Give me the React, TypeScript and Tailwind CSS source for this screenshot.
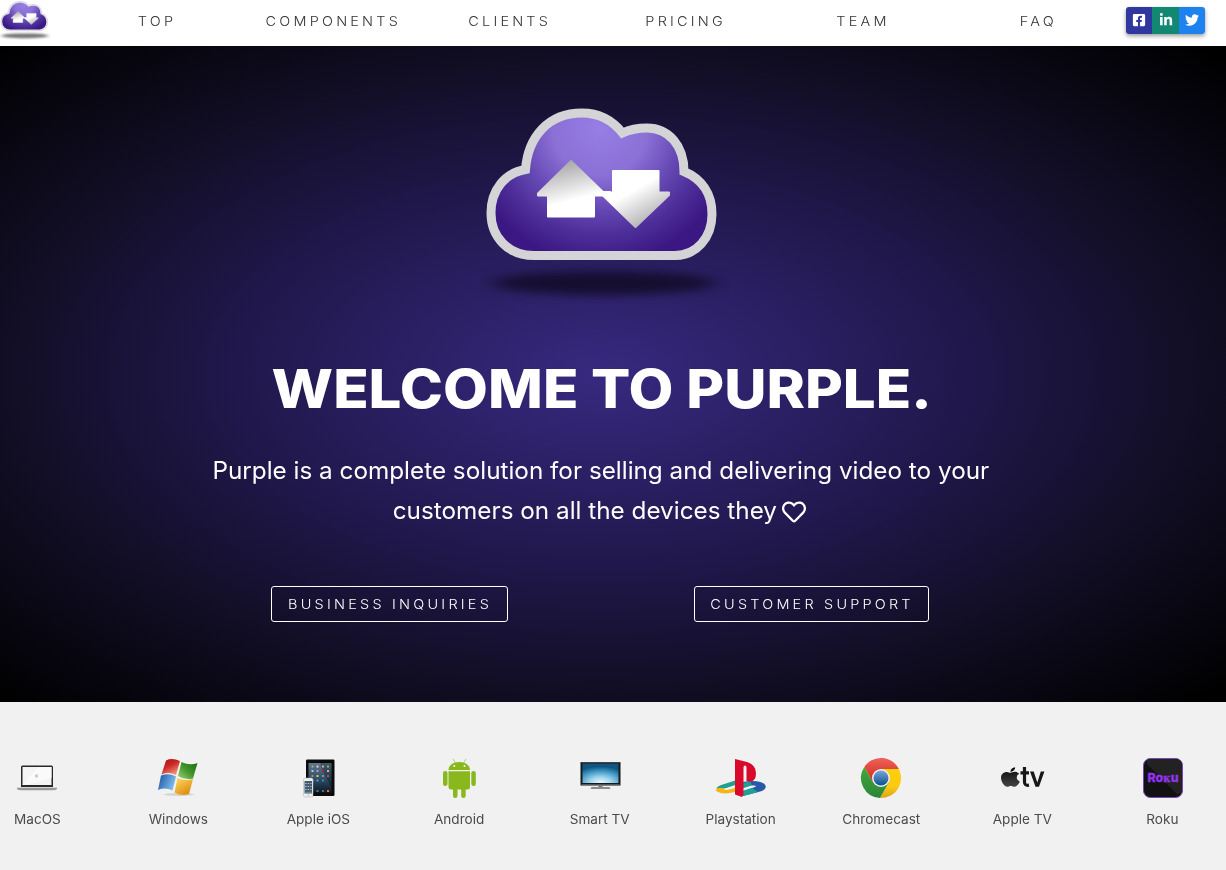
import React from "react";
import { FaFacebookSquare, FaLinkedinIn, FaTwitter, FaRegHeart } from "react-icons/fa";

function CloudLogo({ id, className, rim, shadow }: { id: string; className: string; rim: string; shadow: string }) {
  const cloud =
    "M534 255.500C508 255.500 491 237 491 213C491 190 505 173 525.500 169.500C528 137 548 113 582 113C601 113 613 121 622.500 133C631 129 637 128 647 128C669 128 684 146 684 171.500C702 179 712 194 712 214C712 238 696 255.500 675 255.500Z";
  return (
    <svg className={className} viewBox="480 104 250 200" preserveAspectRatio="none">
      <defs>
        <radialGradient id={id + "b"} gradientUnits="userSpaceOnUse" cx="600" cy="128" r="135">
          <stop offset="0" stopColor="#967ee5" />
          <stop offset=".35" stopColor="#8b70d6" />
          <stop offset=".6" stopColor="#6648b4" />
          <stop offset=".8" stopColor="#4d2e99" />
          <stop offset="1" stopColor="#3b1783" />
        </radialGradient>
        <linearGradient id={id + "u"} x1=".35" y1="0" x2=".6" y2=".75">
          <stop stopColor="#a5a5a8" />
          <stop offset=".9" stopColor="#fff" />
        </linearGradient>
        <linearGradient id={id + "d"} x1=".35" y1=".25" x2=".75" y2=".85">
          <stop offset=".2" stopColor="#fff" />
          <stop offset="1" stopColor="#b6b5b8" />
        </linearGradient>
        <filter id={id + "f"} x="-30%" y="-100%" width="160%" height="300%" colorInterpolationFilters="sRGB">
          <feGaussianBlur stdDeviation="10 5" />
        </filter>
      </defs>
      <ellipse cx="604" cy="283" rx="112" ry="12" fill={shadow} filter={`url(#${id}f)`} />
      <path d={cloud} fill={`url(#${id}b)`} stroke={rim} strokeWidth="9" />
      <path d="M571 161L603 192H610L603 195.500H594V216.500H548V195.500H538V193.500Z" fill={`url(#${id}u)`} stroke={`url(#${id}u)`} strokeWidth="2" strokeLinejoin="round" />
      <path d="M613 171H658.500V192.500H669V195L635.500 227L603 195.500L605 192.500H613Z" fill={`url(#${id}d)`} stroke={`url(#${id}d)`} strokeWidth="2" strokeLinejoin="round" />
    </svg>
  );
}

function MacIcon() {
  return (
    <svg width="52" height="40">
      <rect x="10" y="7.500" width="32" height="22.500" rx="1.500" fill="#292929" />
      <path d="M11.500 9H40.500V27H11.500Z" fill="#f4f4f4" />
      <path d="M27 9H40.500V20L15 27H11.500Z" fill="#fafafa" />
      <circle cx="25.500" cy="18" r="1.700" fill="#ccc" />
      <path d="M6 30H46V31Q45 32.200 42 32.200H10Q7 32.200 6 31Z" fill="#999" />
      <path d="M6 29.500H46" stroke="#d5d5d5" />
    </svg>
  );
}

function WindowsIcon() {
  return (
    <svg width="52" height="40">
      <defs>
        <linearGradient id="wr" x2=".6" y2="1"><stop stopColor="#a60d12" /><stop offset=".5" stopColor="#cb2a26" /><stop offset="1" stopColor="#f0907a" /></linearGradient>
        <linearGradient id="wg" x1="1" x2="0" y2="1"><stop stopColor="#196b12" /><stop offset=".5" stopColor="#429528" /><stop offset="1" stopColor="#9ed276" /></linearGradient>
        <linearGradient id="wb" x2="1" y2=".4"><stop stopColor="#1552a5" /><stop offset="1" stopColor="#80bce9" /></linearGradient>
        <linearGradient id="wy" x2=".7" y2="1"><stop stopColor="#ffdd65" /><stop offset="1" stopColor="#df880b" /></linearGradient>
      </defs>
      <ellipse cx="27" cy="36.500" rx="15" ry="1.500" fill="#d3d3d3" />
      <path d="M14 2.500Q20 -.500 28 3L24 17Q17 13.500 9.500 16.500Z" fill="url(#wr)" />
      <path d="M29.500 4Q38 8 45.500 5L41 20.500Q33 22.500 26 18Z" fill="url(#wg)" />
      <path d="M9 17.500Q17 14.500 24 18.500L20.500 32.500Q13 29 6 32Z" fill="url(#wb)" />
      <path d="M25.500 20Q33 23.500 41 21L37 36Q29 38.500 22.500 34.500Z" fill="url(#wy)" />
    </svg>
  );
}

const apps = [
  [20.5, 8.5, "#91b889"], [25.5, 8.5, "#ddd"], [31, 8.5, "#bcc0b5"], [36, 8.5, "#79bd7c"],
  [20.5, 13, "#b3cddd"], [25.5, 13, "#ad9ccc"], [31, 13, "#c91822"], [36, 13, "#b9c8d1"],
  [20.5, 18, "#cf8239"], [25.5, 18, "#e4cf45"], [31, 18, "#8e9995"], [36, 18, "#b55b3a"],
  [20.5, 22.5, "#5baad3"], [25.5, 22.5, "#5f9ee1"], [31, 22.5, "#4b8ab0"],
  [25.5, 33, "#4a7ba1"], [31, 33, "#3c7db4"], [36, 33, "#f07f1e"],
] as const;

function IosIcon() {
  return (
    <svg width="52" height="40">
      <defs><linearGradient id="ip" x2="0" y2="1"><stop stopColor="#647888" /><stop offset=".5" stopColor="#31516c" /><stop offset="1" stopColor="#101a25" /></linearGradient></defs>
      <rect x="13" y="1.500" width="28.500" height="36.500" rx="1.200" fill="#0b0b0b" />
      <path d="M15.500 5H38.500V34.500H15.500Z" fill="url(#ip)" />
      <path d="M26 2H41V5.500H38.500V30L29 11Z" fill="#000" opacity=".28" />
      {apps.map(([x, y, c], i) => <rect key={i} x={x - 2} y={y - 1} width="2" height="2" rx=".6" fill={c} />)}
      <rect x="10.500" y="20" width="9.500" height="19" rx="1.500" fill="#eee" stroke="#aaa" strokeWidth=".5" />
      <path d="M11.500 23H19V35.500H11.500Z" fill="#435b70" />
      <path d="M12.200 25.500H18.500M12.200 28.500H18.500M12.200 31.500H18.500" stroke="#aab9c4" strokeDasharray="1.500 1" />
      <path d="M12.200 34.300H18.500" stroke="#3dacb5" /><path d="M16.500 34.300H18.500" stroke="#ef5e28" />
      <circle cx="15.300" cy="37.300" r=".8" fill="#bbb" />
    </svg>
  );
}

function AndroidIcon() {
  return (
    <svg width="52" height="40" fill="#88b81c">
      <path d="M20 1L22.500 5M33 1L30.500 5" stroke="#9cc549" strokeWidth=".8" />
      <path d="M15.500 12C16 1.200 36.500 1.200 37 12Z" />
      <circle cx="21.300" cy="8" r="1" fill="#fff" /><circle cx="31.500" cy="8" r="1" fill="#fff" />
      <path d="M15.500 13.300H37V29Q37 31.500 34.500 31.500H18Q15.500 31.500 15.500 29Z" />
      <rect x="10" y="13" width="4.500" height="15" rx="2.200" /><rect x="38.300" y="13" width="4.500" height="15" rx="2.200" />
      <rect x="20" y="27" width="4.500" height="13" rx="2.200" /><rect x="28.200" y="27" width="4.500" height="13" rx="2.200" />
    </svg>
  );
}

function TvIcon() {
  return (
    <svg width="52" height="40">
      <defs><radialGradient id="tv" cx=".5" cy="1" r=".85"><stop stopColor="#eefaff" /><stop offset=".35" stopColor="#a0d6ef" /><stop offset=".75" stopColor="#368fbd" /><stop offset="1" stopColor="#105580" /></radialGradient></defs>
      <rect x="6.500" y="4" width="40" height="23.500" fill="#17191b" />
      <rect x="8.500" y="5.500" width="36" height="19.500" fill="url(#tv)" />
      <path d="M7.500 26.500H45.500" stroke="#555" /><path d="M7 4.500H46" stroke="#444" />
      <rect x="24.500" y="27.500" width="4" height="2" fill="#777" /><path d="M17.500 29H35.500L36.500 31H16.500Z" fill="#8d8d8d" />
    </svg>
  );
}

function PlaystationIcon() {
  return (
    <svg width="52" height="40">
      <path d="M20 23L5 27.500Q-1 31 2 33.500Q8 37 20 34V30L12 32Q7 32 11 30L20 27Z" fill="#f1b719" />
      <path d="M20 22.500L8 26.500Q3 28 1.500 30L11 30L20 27Z" fill="#19a295" />
      <path d="M28 24Q43 21 49.500 26Q53 30 47 33L28 38V33L40 29Q43 27 36 27.500L28 30Z" fill="#2859a8" />
      <path d="M28 33L37 30L43 34L28 38Z" fill="#19a295" /><path d="M28 25L35 23.500L37 27.200L28 30Z" fill="#19a295" />
      <path d="M20 1L32 4Q41 7 41 15Q41 26 31.500 23V9.500Q31.500 7.500 30 7.500T28.500 9.500V37L27 39L20 36.500Z" fill="#d8092b" />
    </svg>
  );
}

function ChromeIcon() {
  return (
    <svg width="52" height="40">
      <defs>
        <linearGradient id="cr" x2="0" y2="1"><stop stopColor="#ef6255" /><stop offset="1" stopColor="#cf2722" /></linearGradient>
        <linearGradient id="cg" x2="0" y2="1"><stop stopColor="#3eaa3b" /><stop offset="1" stopColor="#2c8438" /></linearGradient>
        <linearGradient id="cy" x2="0" y2="1"><stop stopColor="#ffd008" /><stop offset=".6" stopColor="#fcca12" /><stop offset="1" stopColor="#dda417" /></linearGradient>
        <linearGradient id="cb" x2="0" y2="1"><stop stopColor="#78a9d8" /><stop offset="1" stopColor="#0d4f91" /></linearGradient>
      </defs>
      <path d="M26 11H43.860A20 20 0 0 1 24.950 39.970L33.800 24.500Z" fill="url(#cy)" />
      <path d="M18.200 24.500L9.350 8.930A20 20 0 0 0 24.950 39.970L33.800 24.500Z" fill="url(#cg)" />
      <path d="M18.200 24.500L9.350 8.930A20 20 0 0 1 43.860 11H26Z" fill="url(#cr)" />
      <circle cx="26" cy="20" r="9" fill="#eee" /><circle cx="26" cy="20" r="7.500" fill="url(#cb)" />
    </svg>
  );
}

function AppleTvIcon() {
  return (
    <svg width="52" height="40">
      <defs><linearGradient id="at" x2="0" y2="1"><stop stopColor="#0a0a0a" /><stop offset="1" stopColor="#444" /></linearGradient></defs>
      <path transform="translate(4.800 7.800) scale(.05 .0435)" fill="url(#at)" d="M318.700 268.700c-.2-36.700 16.400-64.400 50-84.800-18.800-26.900-47.200-41.700-84.700-44.600-35.500-2.800-74.300 20.700-88.500 20.700-15 0-49.400-19.700-76.400-19.700C63.300 141.200 4 184.800 4 273.500q0 39.300 14.400 81.200c12.800 36.700 59 126.700 107.200 125.200 25.200-.6 43-17.900 75.800-17.900 31.800 0 48.300 17.900 76.400 17.900 48.600-.7 90.400-82.500 102.600-119.300-65.200-30.700-61.700-90-61.700-91.900zm-56.600-164.200c27.300-32.400 24.800-61.900 24-72.500-24.100 1.400-52 16.400-67.900 34.900-17.500 19.800-27.800 44.300-25.600 71.900 26.100 2 49.900-11.400 69.500-34.300z" />
      <path d="M28.500 9V24Q28.500 28 33 27.200M24.500 14.800H33" fill="none" stroke="#171717" strokeWidth="3.200" />
      <path d="M34 13.500H37.700L41.300 24.500L44.800 13.500H48.400L43 28.800H39.500Z" fill="#171717" />
    </svg>
  );
}

function RokuIcon() {
  return (
    <svg width="52" height="40">
      <rect x="6.500" y=".5" width="39" height="39" rx="7" fill="#111" stroke="#7846b8" />
      <path d="M10 6L40 36Q45 36 45 32V8Q45 1 38 1H14Q9 1 10 6Z" fill="#222" />
      <text x="10.500" y="24" textLength="31" lengthAdjust="spacingAndGlyphs" fill="#9433ef" stroke="#9433ef" strokeWidth=".3" className="font-['Inter'] text-[12px] font-extrabold">Roᴋu</text>
    </svg>
  );
}

const nav = [
  ["TOP", "w-[176px]"],
  ["COMPONENTS", "w-[177px]"],
  ["CLIENTS", "w-[176px]"],
  ["PRICING", "w-[177px]"],
  ["TEAM", "w-[176px]"],
  ["FAQ", "w-[176px]"],
];

const platforms = [
  ["MacOS", MacIcon], ["Windows", WindowsIcon], ["Apple iOS", IosIcon],
  ["Android", AndroidIcon], ["Smart TV", TvIcon], ["Playstation", PlaystationIcon],
  ["Chromecast", ChromeIcon], ["Apple TV", AppleTvIcon], ["Roku", RokuIcon],
] as const;

export default function App() {
  return (
    <div className="h-[870px] w-[1226px] overflow-hidden bg-[#f1f1f1] font-['Inter',sans-serif]">
      <header className="flex h-[46px] bg-white">
        <CloudLogo id="small" className="-ml-[1px] h-[40px] w-[52px] shrink-0" rim="#dddce2" shadow="#777" />
        <nav className="ml-[16px] flex h-[42px] items-center">
          {nav.map(([label, width]) => (
            <a key={label} className={`${width} pl-[3px] text-center text-[13.500px] font-light tracking-[3px] text-[#333]`}>
              <span className="inline-block scale-x-[1.07]">{label}</span>
            </a>
          ))}
        </nav>
        <div className="mt-[7px] ml-[1px] flex h-[27px] w-[79px] overflow-hidden rounded-[3px] text-[14px] text-white shadow-[0_2px_4px_rgba(0,0,0,.4)]">
          <span className="flex w-[26px] items-center justify-center bg-[#3038a0] pb-[1px]"><FaFacebookSquare /></span>
          <span className="flex w-[27px] items-center justify-center bg-[#128873] pb-[2px]"><FaLinkedinIn /></span>
          <span className="flex w-[26px] items-center justify-center bg-[#1d82f0] pb-[1px]"><FaTwitter /></span>
        </div>
      </header>
      <main className="h-[656px] bg-[radial-gradient(ellipse_at_601px_50%,#372980_0%,#20184c_41%,#110e24_68%,#000_98%)] pr-[25px] text-center text-white">
        <div className="flex justify-center pt-[58px]">
          <CloudLogo id="large" className="ml-[9px] h-[200px] w-[250px]" rim="#d4d4d6" shadow="#160e30" />
        </div>
        <h1 className="mt-[50px] h-[70px] text-[53.500px] leading-[70px] font-extrabold whitespace-nowrap"><span className="inline-block translate-x-[1px] scale-x-[1.087]">WELCOME TO PURPLE.</span></h1>
        <p className="mt-[27px] text-[24px] leading-[40px] whitespace-nowrap">
          <span className="inline-block scale-x-[1.012]">Purple is a complete solution for selling and delivering video to your</span><br />
          <span className="inline-block scale-x-[1.012]">customers on all the devices they</span> <FaRegHeart className="ml-[1px] inline" />
        </p>
        <div className="mt-[55px] flex pl-[271px] text-[13.500px] font-light tracking-[3px]">
          <a className="flex h-[36px] w-[237px] items-center justify-center rounded-[3px] border border-white pt-[1px] pl-[1px] whitespace-nowrap"><span className="scale-x-[1.073]">BUSINESS INQUIRIES</span></a>
          <a className="ml-[186px] flex h-[36px] w-[235px] items-center justify-center rounded-[3px] border border-white pt-[1px] pl-[2px] whitespace-nowrap"><span className="scale-x-[1.070]">CUSTOMER SUPPORT</span></a>
        </div>
      </main>
      <section className="-ml-[33px] flex pt-[56px]">
        {platforms.map(([name, Icon]) => (
          <div key={name} className="flex w-[140.700px] shrink-0 flex-col items-center">
            <Icon />
            <span className="mt-[11px] scale-x-[1.045] text-[13px] leading-[20px] text-[#4a4a4a]">{name}</span>
          </div>
        ))}
      </section>
    </div>
  );
}
